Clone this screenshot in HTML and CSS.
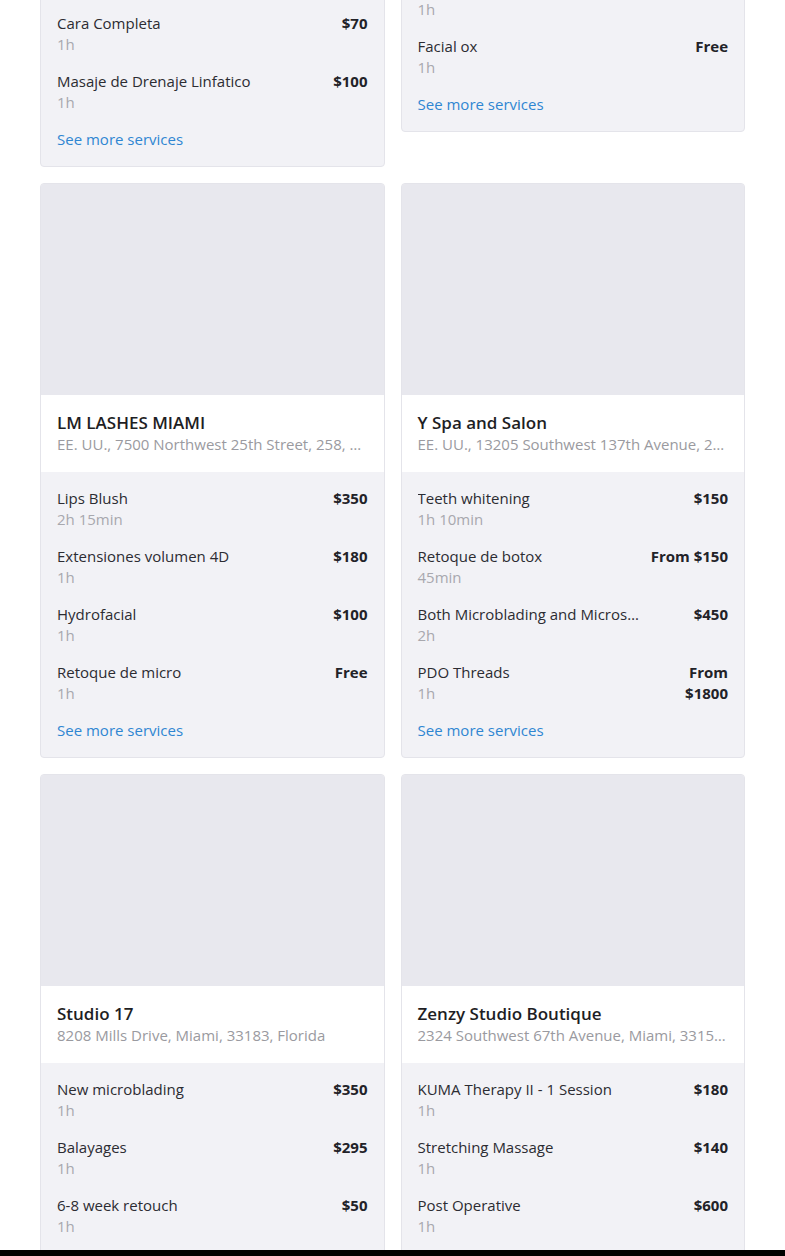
FILE: index.html
```html
<!DOCTYPE html>
<html lang="en">
  <head>
    <meta charset="UTF-8" />
    <meta name="viewport" content="width=device-width, initial-scale=1.0" />
    <title>Salons</title>
    <link rel="stylesheet" href="styles.css">
  </head>
  <body>
    <div class="salon-grid">
      <!-- Row 1 -->
      <div class="salon-card">
        <div class="salon-photo"></div>
        <div class="salon-head">
          <div class="salon-name">Bella Skin Studio</div>
          <div class="salon-address">EE. UU., 1200 Brickell Avenue, Miami, 33131, Florida</div>
        </div>
        <div class="service-list">
          <div class="service">
            <div class="service-info">
              <div class="service-name">Limpieza Facial</div>
              <div class="service-time">1h</div>
            </div>
            <div class="service-price">$50</div>
          </div>
          <div class="service">
            <div class="service-info">
              <div class="service-name">Microblading</div>
              <div class="service-time">2h</div>
            </div>
            <div class="service-price">$300</div>
          </div>
          <div class="service">
            <div class="service-info">
              <div class="service-name">Cara Completa</div>
              <div class="service-time">1h</div>
            </div>
            <div class="service-price">$70</div>
          </div>
          <div class="service">
            <div class="service-info">
              <div class="service-name">Masaje de Drenaje Linfatico</div>
              <div class="service-time">1h</div>
            </div>
            <div class="service-price">$100</div>
          </div>
          <a href="#" class="more-link">See more services</a>
        </div>
      </div>

      <div class="salon-card">
        <div class="salon-photo"></div>
        <div class="salon-head">
          <div class="salon-name">Glow Aesthetics Medical Spa and Beauty Lounge</div>
          <div class="salon-address">EE. UU., 8900 Southwest 72nd Street, Miami, 33156, Florida</div>
        </div>
        <div class="service-list">
          <div class="service">
            <div class="service-info">
              <div class="service-name">Dermaplaning</div>
              <div class="service-time">1h</div>
            </div>
            <div class="service-price">$80</div>
          </div>
          <div class="service">
            <div class="service-info">
              <div class="service-name">Hydrafacial</div>
              <div class="service-time">1h</div>
            </div>
            <div class="service-price">$150</div>
          </div>
          <div class="service">
            <div class="service-info">
              <div class="service-name">Facial ox</div>
              <div class="service-time">1h</div>
            </div>
            <div class="service-price">Free</div>
          </div>
          <a href="#" class="more-link">See more services</a>
        </div>
      </div>

      <!-- Row 2 -->
      <div class="salon-card">
        <div class="salon-photo"></div>
        <div class="salon-head">
          <div class="salon-name">LM LASHES MIAMI</div>
          <div class="salon-address">EE. UU., 7500 Northwest 25th Street, 258, Miami, 33122, Florida</div>
        </div>
        <div class="service-list">
          <div class="service">
            <div class="service-info">
              <div class="service-name">Lips Blush</div>
              <div class="service-time">2h 15min</div>
            </div>
            <div class="service-price">$350</div>
          </div>
          <div class="service">
            <div class="service-info">
              <div class="service-name">Extensiones volumen 4D</div>
              <div class="service-time">1h</div>
            </div>
            <div class="service-price">$180</div>
          </div>
          <div class="service">
            <div class="service-info">
              <div class="service-name">Hydrofacial</div>
              <div class="service-time">1h</div>
            </div>
            <div class="service-price">$100</div>
          </div>
          <div class="service">
            <div class="service-info">
              <div class="service-name">Retoque de micro</div>
              <div class="service-time">1h</div>
            </div>
            <div class="service-price">Free</div>
          </div>
          <a href="#" class="more-link">See more services</a>
        </div>
      </div>

      <div class="salon-card">
        <div class="salon-photo"></div>
        <div class="salon-head">
          <div class="salon-name">Y Spa and Salon</div>
          <div class="salon-address">EE. UU., 13205 Southwest 137th Avenue, 201, Miami, 33186, Florida</div>
        </div>
        <div class="service-list">
          <div class="service">
            <div class="service-info">
              <div class="service-name">Teeth whitening</div>
              <div class="service-time">1h 10min</div>
            </div>
            <div class="service-price">$150</div>
          </div>
          <div class="service">
            <div class="service-info">
              <div class="service-name">Retoque de botox</div>
              <div class="service-time">45min</div>
            </div>
            <div class="service-price">From $150</div>
          </div>
          <div class="service">
            <div class="service-info">
              <div class="service-name">Both Microblading and Microshading</div>
              <div class="service-time">2h</div>
            </div>
            <div class="service-price">$450</div>
          </div>
          <div class="service">
            <div class="service-info">
              <div class="service-name">PDO Threads</div>
              <div class="service-time">1h</div>
            </div>
            <div class="service-price">From $1800</div>
          </div>
          <a href="#" class="more-link">See more services</a>
        </div>
      </div>

      <!-- Row 3 -->
      <div class="salon-card">
        <div class="salon-photo"></div>
        <div class="salon-head">
          <div class="salon-name">Studio 17</div>
          <div class="salon-address">8208 Mills Drive, Miami, 33183, Florida</div>
        </div>
        <div class="service-list">
          <div class="service">
            <div class="service-info">
              <div class="service-name">New microblading</div>
              <div class="service-time">1h</div>
            </div>
            <div class="service-price">$350</div>
          </div>
          <div class="service">
            <div class="service-info">
              <div class="service-name">Balayages</div>
              <div class="service-time">1h</div>
            </div>
            <div class="service-price">$295</div>
          </div>
          <div class="service">
            <div class="service-info">
              <div class="service-name">6-8 week retouch</div>
              <div class="service-time">1h</div>
            </div>
            <div class="service-price">$50</div>
          </div>
          <div class="service">
            <div class="service-info">
              <div class="service-name">Brow lamination</div>
              <div class="service-time">1h</div>
            </div>
            <div class="service-price">$90</div>
          </div>
          <a href="#" class="more-link">See more services</a>
        </div>
      </div>

      <div class="salon-card">
        <div class="salon-photo"></div>
        <div class="salon-head">
          <div class="salon-name">Zenzy Studio Boutique</div>
          <div class="salon-address">2324 Southwest 67th Avenue, Miami, 33155, Florida</div>
        </div>
        <div class="service-list">
          <div class="service">
            <div class="service-info">
              <div class="service-name">KUMA Therapy II - 1 Session</div>
              <div class="service-time">1h</div>
            </div>
            <div class="service-price">$180</div>
          </div>
          <div class="service">
            <div class="service-info">
              <div class="service-name">Stretching Massage</div>
              <div class="service-time">1h</div>
            </div>
            <div class="service-price">$140</div>
          </div>
          <div class="service">
            <div class="service-info">
              <div class="service-name">Post Operative</div>
              <div class="service-time">1h</div>
            </div>
            <div class="service-price">$600</div>
          </div>
          <div class="service">
            <div class="service-info">
              <div class="service-name">Lymphatic Drainage</div>
              <div class="service-time">1h</div>
            </div>
            <div class="service-price">$120</div>
          </div>
          <a href="#" class="more-link">See more services</a>
        </div>
      </div>
    </div>

    <!-- bottom bar -->
    <div class="bottom-bar"></div>
  </body>
</html>
```

FILE: styles.css
```css
* {
  margin: 0;
  padding: 0;
  box-sizing: border-box;
  font-family: "Open Sans", Lato, sans-serif;
}

body {
  background-color: #fff;
  overflow: hidden;
}

.salon-grid {
  display: grid;
  grid-template-columns: 1fr 1fr;
  gap: 16px;
  align-items: start;
  padding: 0 40px;
  margin-top: -408px;
}

.salon-card {
  border: 1px solid #e4e4ea;
  border-radius: 4px;
  overflow: hidden;
  background-color: #f2f2f6;
}

.salon-photo {
  height: 211px;
  background-color: #e8e8ee;
}

.salon-head {
  background-color: #fff;
  padding: 16px 16px 17px 16px;
}

.salon-name {
  font-size: 17px;
  line-height: 23px;
  font-weight: 600;
  color: #1e1e24;
}

.salon-address {
  font-size: 15px;
  line-height: 21px;
  color: #9a9aa0;
  white-space: nowrap;
  overflow: hidden;
  text-overflow: ellipsis;
}

.service-list {
  display: flex;
  flex-direction: column;
  gap: 16px;
  padding: 16px;
}

.service {
  display: flex;
  justify-content: space-between;
  gap: 8px;
}

.service-info {
  flex: 1;
  min-width: 0;
}

.service-name {
  font-size: 15px;
  line-height: 21px;
  color: #2c2c32;
  white-space: nowrap;
  overflow: hidden;
  text-overflow: ellipsis;
}

.service-time {
  font-size: 15px;
  line-height: 21px;
  color: #a8a8ae;
}

.service-price {
  flex: 0 0 80px;
  text-align: right;
  font-size: 15px;
  line-height: 21px;
  font-weight: 700;
  color: #222228;
}

.more-link {
  font-size: 15px;
  line-height: 21px;
  color: #2f86d2;
  text-decoration: none;
}

.bottom-bar {
  position: fixed;
  left: 0;
  bottom: 0;
  width: 100%;
  height: 6px;
  background-color: #000;
}
```
